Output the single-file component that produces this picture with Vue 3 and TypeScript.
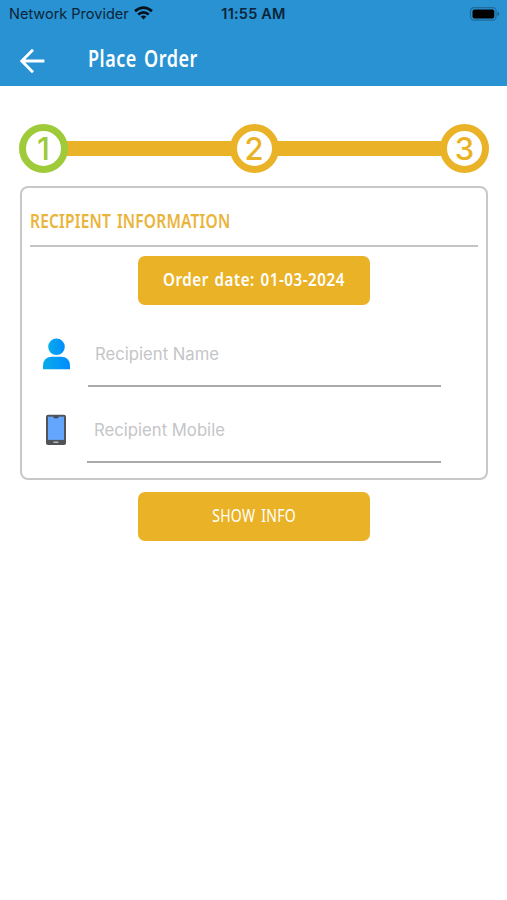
<script setup lang="ts">
import { ref } from 'vue'

interface Step {
  label: string
  active: boolean
}

const steps: Step[] = [
  { label: '1', active: true },
  { label: '2', active: false },
  { label: '3', active: false },
]
const recipientName = ref('')
const recipientMobile = ref('')
</script>

<template>
  <main class="screen">
    <header class="header">
      <div class="status">
        <div class="carrier">
          <span class="provider">Network Provider</span>
          <svg class="wifi" viewBox="0 0 19 14" width="19" height="14">
            <g fill="none" stroke="#07131c" stroke-width="2.7">
              <path d="M1 5.1Q9.5 -2 18 5.1" />
              <path d="M4.2 8.5Q9.5 4.1 14.8 8.5" />
            </g>
            <path d="M6.7 10.6Q9.5 8.3 12.3 10.6L9.5 13.6Z" fill="#07131c" />
          </svg>
        </div>
        <span class="clock">11:55 AM</span>
        <svg class="battery" viewBox="0 0 31 14" width="31" height="14">
          <rect x="1.5" y="0.7" width="25.6" height="12.4" rx="3.6" fill="none" stroke="#1f6b9b" stroke-width="1.2" />
          <rect x="3.5" y="2.4" width="21.8" height="9" rx="2" fill="#000" />
          <path d="M28.5 4.8Q30.3 5.4 30.3 6.9T28.5 9Z" fill="#1c5f88" />
        </svg>
      </div>
      <nav class="bar">
        <svg class="back" viewBox="0 0 26 26" width="26" height="26">
          <path d="M13 1.7L1.8 13L13 24.3M2 13H24.4" fill="none" stroke="#fff" stroke-width="2.8" />
        </svg>
        <h1 class="title"><span>Place Order</span></h1>
      </nav>
    </header>

    <ol class="steps">
      <li v-for="step in steps" :key="step.label" class="step" :class="{ active: step.active }">
        {{ step.label }}
      </li>
    </ol>

    <section class="card">
      <h2 class="heading"><span>RECIPIENT INFORMATION</span></h2>
      <button class="button date"><span>Order date: 01-03-2024</span></button>
      <label class="field name">
        <svg viewBox="0 0 28 32" width="28" height="32">
          <defs>
            <linearGradient id="person" x1="0" x2="1" y1="0" y2="0">
              <stop offset="0" stop-color="#08ace8" />
              <stop offset="1" stop-color="#008cff" />
            </linearGradient>
          </defs>
          <g fill="url(#person)">
            <circle cx="13.5" cy="8.8" r="8.3" />
            <path d="M0 31.2V27.5Q0.5 18.8 9 18.8H18Q26.5 18.8 27 27.5V31.2Z" />
          </g>
        </svg>
        <input v-model="recipientName" type="text" placeholder="Recipient Name" />
      </label>
      <label class="field mobile">
        <svg viewBox="0 0 28 32" width="28" height="32">
          <rect x="3" y="0.8" width="20" height="30.2" rx="2" fill="#505358" />
          <rect x="5" y="2.7" width="16" height="23.2" fill="#64a5fd" />
          <path d="M10 2.5H16L14.8 4.3H11.2Z" fill="#41454c" />
          <rect x="10.4" y="27.5" width="5" height="1.6" rx="0.5" fill="#b7babd" />
        </svg>
        <input v-model="recipientMobile" type="tel" placeholder="Recipient Mobile" />
      </label>
    </section>

    <button class="button show"><span>SHOW INFO</span></button>
  </main>
</template>

<style>
body {
  background: #fff;
}
</style>

<style scoped>
* {
  box-sizing: border-box;
}
.screen {
  width: 507px;
  height: 900px;
  background: #fff;
  font-family: 'Noto Sans', sans-serif;
  overflow: hidden;
}
.header {
  height: 86px;
  background: #2992d2;
}
.status {
  display: grid;
  grid-template-columns: 1fr 66px 1fr;
  align-items: center;
  height: 28px;
  padding: 0 7px 0 9px;
  font: 14.5px/28px Inter, sans-serif;
  color: #0a2538;
}
.carrier {
  display: flex;
  align-items: center;
  gap: 5px;
}
.provider {
  width: 120px;
  white-space: nowrap;
}
.wifi {
  margin-top: -2px;
}
.clock {
  margin-left: -2px;
  font-weight: 600;
  letter-spacing: 0.2px;
  white-space: nowrap;
  text-align: center;
}
.battery {
  justify-self: end;
  margin-top: -1px;
}
.bar {
  display: flex;
  align-items: center;
  gap: 42px;
  height: 58px;
  padding: 0 20px;
}
.back {
  margin-top: 8px;
}
.title {
  margin: 4px 0 0;
  font-size: 22.5px;
  line-height: 32px;
  font-weight: 600;
  color: #fff;
}
.title span {
  display: inline-block;
  transform: scaleX(0.8);
  transform-origin: left;
  letter-spacing: 0.65px;
  word-spacing: 2.5px;
  white-space: nowrap;
}
.steps {
  display: flex;
  justify-content: space-between;
  width: 470px;
  height: 49px;
  margin: 38px 0 0 19px;
  padding: 0;
  list-style: none;
  background: linear-gradient(#eab226, #eab226) center / 420px 15px no-repeat;
}
.step {
  width: 49px;
  height: 49px;
  border: 7px solid #eab226;
  border-radius: 50%;
  background: #fff;
  color: #eab226;
  font: 500 31px/35px Inter, sans-serif;
  text-align: center;
}
.step.active {
  border-color: #9fca39;
  color: #9fca39;
}
.card {
  width: 468px;
  height: 294px;
  margin: 13px 0 0 20px;
  border: 2px solid #c8c8c8;
  border-radius: 8px;
}
.heading {
  height: 59px;
  margin: 0 8px;
  padding-top: 18px;
  border-bottom: 2px solid #c4c4c4;
  color: #eab43a;
  font-size: 19.5px;
  line-height: 30px;
  font-weight: 600;
}
.heading span {
  display: inline-block;
  transform: scaleX(0.795);
  transform-origin: left;
  letter-spacing: 0.25px;
  word-spacing: 2px;
  white-space: nowrap;
}
.button {
  display: flex;
  align-items: center;
  justify-content: center;
  width: 232px;
  height: 49px;
  padding: 0 0 4px;
  border: 0;
  border-radius: 7px;
  background: #eab226;
  color: #fff;
  font-family: inherit;
  font-size: 18.5px;
  white-space: nowrap;
}
.date {
  margin: 9px 0 0 115.5px;
  font-weight: 600;
}
.date span {
  transform: scaleX(0.82);
  letter-spacing: 0.65px;
  word-spacing: 1.5px;
}
.field {
  display: flex;
  align-items: center;
  height: 65px;
  padding-left: 21px;
}
.field svg {
  flex: none;
  margin-bottom: 2px;
}
.field input {
  width: 353px;
  height: 65px;
  margin-left: 17px;
  padding: 1px 7px 0;
  border: 0;
  border-bottom: 2px solid #aaa;
  outline: 0;
  background: transparent;
  font: 16.7px Inter, sans-serif;
  color: #333;
}
.field input::placeholder {
  color: #c5c5c7;
  opacity: 1;
}
.name {
  margin-top: 17px;
}
.mobile {
  margin-top: 11px;
}
.mobile input {
  width: 354px;
  margin-left: 16px;
}
.show {
  margin: 12px 0 0 138px;
  padding-bottom: 5px;
}
.show span {
  transform: scaleX(0.76);
  letter-spacing: 0.3px;
  word-spacing: 3px;
}
</style>
